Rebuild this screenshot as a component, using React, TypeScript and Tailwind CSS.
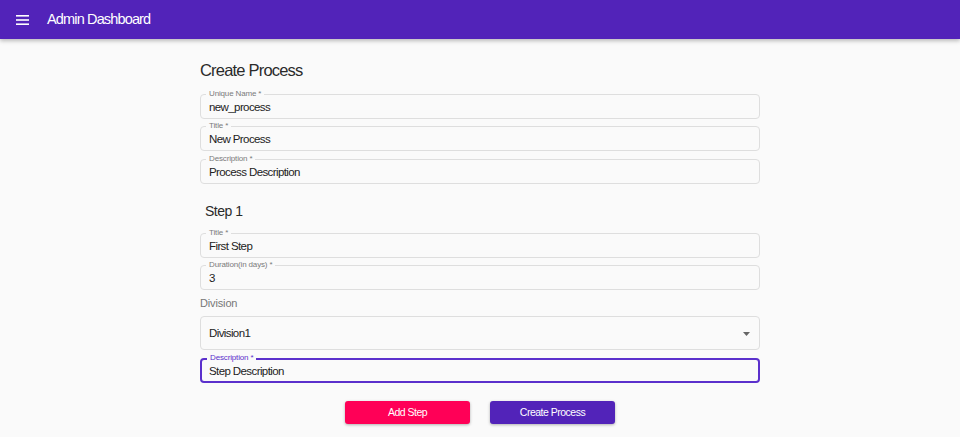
import React from "react";

function Field({ label, value, focused }: { label: string; value: string; focused?: boolean }) {
  return (
    <div
      className={
        "relative w-full rounded-[4px] bg-[#fafafa] " +
        (focused ? "h-[25px] border-2 border-[#5b30cc]" : "h-[25px] border border-[#dedede]")
      }
    >
      <span
        className={
          "absolute left-[5px] top-[-6px] bg-[#fafafa] px-[3px] text-[8px] leading-[10px] tracking-[-0.15px] " +
          (focused ? "text-[#5b30cc] left-[4px] top-[-7px]" : "text-[#7a7a7a]")
        }
      >
        {label}
      </span>
      <div
        className={
          "flex h-full items-center text-[11.5px] tracking-[-0.6px] text-[#222] " +
          (focused ? "pl-[7px] pt-[3px]" : "pl-[8px] pt-[2px]")
        }
      >
        {value}
      </div>
    </div>
  );
}

export default function App() {
  return (
    <div className="min-h-[437px] bg-[#fafafa] font-['Liberation_Sans',Arial,sans-serif]">
      <header className="flex h-[39px] items-center bg-[#5223b9] shadow-[0_2px_4px_rgba(0,0,0,0.25)]">
        <svg className="ml-[16px]" width="13" height="10" viewBox="0 0 13 10" fill="#fff">
          <rect x="0" y="0" width="13" height="1.6" />
          <rect x="0" y="4.2" width="13" height="1.6" />
          <rect x="0" y="8.4" width="13" height="1.6" />
        </svg>
        <span className="ml-[18px] text-[14.5px] tracking-[-0.85px] text-white">Admin Dashboard</span>
      </header>
      <main className="mx-auto flex w-[560px] flex-col pt-[19px]">
        <h1 className="h-[24px] text-[16.5px] leading-[24px] tracking-[-0.8px] text-[#2a2a2a]">Create Process</h1>
        <div className="mt-[12px]">
          <Field label="Unique Name *" value="new_process" />
        </div>
        <div className="mt-[7px]">
          <Field label="Title *" value="New Process" />
        </div>
        <div className="mt-[8px]">
          <Field label="Description *" value="Process Description" />
        </div>
        <h2 className="ml-[5px] mt-[17px] h-[20px] text-[14px] leading-[20px] tracking-[-0.5px] text-[#2a2a2a]">Step 1</h2>
        <div className="mt-[12px]">
          <Field label="Title *" value="First Step" />
        </div>
        <div className="mt-[7px]">
          <Field label="Duration(in days) *" value="3" />
        </div>
        <div className="mt-[6px] h-[14px] text-[11px] leading-[14px] tracking-[-0.15px] text-[#777]">Division</div>
        <div className="mt-[6px] flex h-[34px] items-center justify-between rounded-[4px] border border-[#dedede] pl-[8px] pr-[9px] pt-[1px]">
          <span className="text-[11.5px] tracking-[-0.6px] text-[#222]">Division1</span>
          <svg width="7" height="4" viewBox="0 0 7 4" fill="#666">
            <path d="M0 0h7L3.5 4z" />
          </svg>
        </div>
        <div className="mt-[8px]">
          <Field label="Description *" value="Step Description" focused />
        </div>
        <div className="mt-[18px] flex justify-center gap-[20px]">
          <button className="h-[23px] w-[125px] rounded-[3px] bg-[#ff0057] text-[10.5px] tracking-[-0.5px] text-white shadow-[0_1px_3px_rgba(0,0,0,0.3)]">
            Add Step
          </button>
          <button className="h-[23px] w-[125px] rounded-[3px] bg-[#5223b9] text-[10.5px] tracking-[-0.5px] text-white shadow-[0_1px_3px_rgba(0,0,0,0.3)]">
            Create Process
          </button>
        </div>
      </main>
    </div>
  );
}
